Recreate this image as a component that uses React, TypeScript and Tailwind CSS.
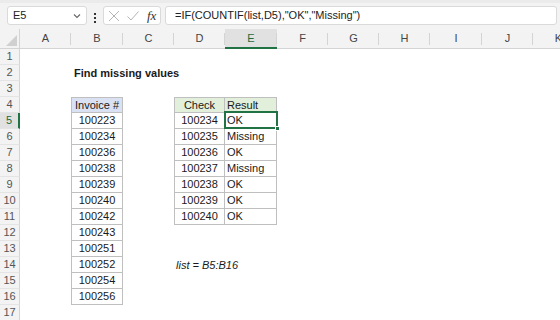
import React from 'react';

const cols = [
  { id: 'A', w: 'w-[51px]' },
  { id: 'B', w: 'w-[52px]' },
  { id: 'C', w: 'w-[51px]' },
  { id: 'D', w: 'w-[51px]' },
  { id: 'E', w: 'w-[52px]' },
  { id: 'F', w: 'w-[51px]' },
  { id: 'G', w: 'w-[51px]' },
  { id: 'H', w: 'w-[51px]' },
  { id: 'I', w: 'w-[52px]' },
  { id: 'J', w: 'w-[51px]' },
  { id: 'K', w: 'w-[51px]' },
];

const invoices = ['100223', '100234', '100236', '100238', '100239', '100240', '100242', '100243', '100251', '100252', '100254', '100256'];
const checks = [
  ['100234', 'OK'],
  ['100235', 'Missing'],
  ['100236', 'OK'],
  ['100237', 'Missing'],
  ['100238', 'OK'],
  ['100239', 'OK'],
  ['100240', 'OK'],
];

type Cell = { text?: string; cls?: string; active?: boolean };

const getCell = (col: string, row: number): Cell => {
  if (col === 'B' && row === 2) return { text: 'Find missing values', cls: 'font-bold pl-[3px] overflow-visible z-10' };
  if (col === 'D' && row === 14) return { text: 'list = B5:B16', cls: 'italic pl-[2px] overflow-visible z-10' };
  if (col === 'B' && row === 4) return { text: 'Invoice #', cls: 'bg-[#d9e1f2] border border-[#bfbfbf] justify-center' };
  if (col === 'B' && row >= 5 && row <= 16)
    return { text: invoices[row - 5], cls: 'border-x border-b border-[#bfbfbf] justify-center' };
  if (col === 'D' && row === 4) return { text: 'Check', cls: 'bg-[#e2efda] border border-[#bfbfbf] justify-center' };
  if (col === 'E' && row === 4) return { text: 'Result', cls: 'bg-[#e2efda] border-y border-r border-[#bfbfbf] pl-[2px]' };
  if (col === 'D' && row >= 5 && row <= 11)
    return { text: checks[row - 5][0], cls: 'border-x border-b border-[#bfbfbf] justify-center' };
  if (col === 'E' && row >= 5 && row <= 11)
    return { text: checks[row - 5][1], cls: 'border-r border-b border-[#bfbfbf] pl-[2px]', active: row === 5 };
  return {};
};

const rows = Array.from({ length: 17 }, (_, i) => i + 1);

const App = () => {
  return (
    <div className="w-[560px] h-[320px] overflow-hidden bg-white text-[11px] text-[#1a1a1a]" style={{ fontFamily: '"Liberation Sans", Arial, sans-serif' }}>
      {/* formula toolbar */}
      <div className="h-[29px] bg-[#f3f3f3] flex items-start pt-[6px] border-t-[3px] border-[#ebebeb]">
        <div className="ml-[7px] w-[80px] h-[19px] bg-white border border-[#dadada] rounded-[3px] flex items-center justify-between pl-[5px] pr-[4px] mt-[-3px]">
          <span className="text-[#222]">E5</span>
          <svg width="10" height="10" viewBox="0 0 10 10">
            <path d="M2 3.5 L5 6.5 L8 3.5" fill="none" stroke="#666" strokeWidth="1.1" />
          </svg>
        </div>
        <div className="ml-[7px] mt-[1px] h-[16px] flex flex-col justify-center gap-[2px]">
          <div className="w-[2px] h-[2px] bg-[#333]" />
          <div className="w-[2px] h-[2px] bg-[#333]" />
          <div className="w-[2px] h-[2px] bg-[#333]" />
        </div>
        <div className="ml-[7px] w-[58px] h-[19px] bg-white border border-[#dadada] rounded-[3px] flex items-center px-[3px] gap-[5px] mt-[-3px]">
          <svg width="14" height="14" viewBox="0 0 14 14">
            <path d="M2 2 L12 12 M12 2 L2 12" stroke="#b4b4b4" strokeWidth="1" fill="none" />
          </svg>
          <svg width="14" height="14" viewBox="0 0 14 14">
            <path d="M1.5 7.5 L5 11 L12.5 2.5" stroke="#b4b4b4" strokeWidth="1" fill="none" />
          </svg>
          <span className="ml-[2px] text-[13px] italic text-[#333]" style={{ fontFamily: '"Liberation Serif", serif' }}>
            fx
          </span>
        </div>
        <div className="ml-[4px] flex-1 mr-[3px] h-[19px] bg-white border border-[#dadada] rounded-[3px] flex items-center pl-[9px] mt-[-3px] text-[#222] whitespace-nowrap">
          =IF(COUNTIF(list,D5),"OK","Missing")
        </div>
      </div>

      {/* column headers */}
      <div className="h-[20px] flex bg-[#f3f3f3] border-b border-[#d4d4d4] text-[#444]">
        <div className="w-[20px] shrink-0 relative border-r border-[#d4d4d4]">
          <svg className="absolute right-[2px] bottom-[2px]" width="11" height="11" viewBox="0 0 11 11">
            <path d="M11 0 L11 11 L0 11 Z" fill="#d0d0d0" />
          </svg>
        </div>
        {cols.map((c) => (
          <div
            key={c.id}
            className={`${c.w} shrink-0 flex items-center justify-center relative ${
              c.id === 'E' ? 'bg-[#e1e1e1] text-[#1d6b3f] border-b-2 border-[#217346] -mb-[1px]' : ''
            }`}
          >
            {c.id}
            <div className="absolute right-0 top-[4px] bottom-[3px] w-[1px] bg-[#d4d4d4]" />
          </div>
        ))}
      </div>

      {/* grid */}
      {rows.map((r) => (
        <div key={r} className="h-[16px] flex">
          <div
            className={`w-[20px] shrink-0 flex items-center justify-center border-b border-[#e4e4e4] ${
              r === 5 ? 'bg-[#e1e1e1] text-[#1d6b3f] border-r-2 border-r-[#217346]' : 'bg-[#f3f3f3] text-[#555] border-r border-r-[#d4d4d4]'
            }`}
          >
            {r}
          </div>
          {cols.map((c) => {
            const cell = getCell(c.id, r);
            return (
              <div
                key={c.id}
                className={`${c.w} shrink-0 h-[16px] flex items-center whitespace-nowrap relative ${cell.cls ?? ''}`}
              >
                {cell.text}
                {cell.active && (
                  <div className="absolute -left-[1px] -top-[2px] -right-[2px] -bottom-[1px] border-2 border-[#217346] z-20">
                    <div className="absolute -right-[4px] -bottom-[4px] w-[5px] h-[5px] bg-[#217346] border border-white" />
                  </div>
                )}
              </div>
            );
          })}
        </div>
      ))}
    </div>
  );
};

export default App;
